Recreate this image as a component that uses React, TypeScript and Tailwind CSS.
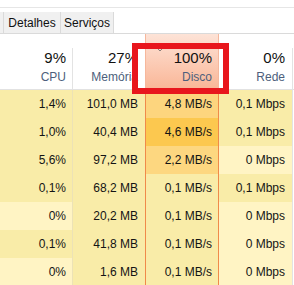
import React from "react";

type Row = {
  cpu: string;
  mem: string;
  disk: string;
  net: string;
  cpuBg: string;
  diskBg: string;
  netBg: string;
};

const DARK = "bg-[#f9eca8]";
const LIGHT = "bg-[#fff4c4]";

const rows: Row[] = [
  { cpu: "1,4%", mem: "101,0 MB", disk: "4,8 MB/s", net: "0,1 Mbps", cpuBg: DARK, diskBg: "bg-[#fdd57e]", netBg: DARK },
  { cpu: "1,0%", mem: "40,4 MB", disk: "4,6 MB/s", net: "0,1 Mbps", cpuBg: DARK, diskBg: "bg-[#fcc84f]", netBg: DARK },
  { cpu: "5,6%", mem: "97,2 MB", disk: "2,2 MB/s", net: "0 Mbps", cpuBg: DARK, diskBg: "bg-[#fdd780]", netBg: LIGHT },
  { cpu: "0,1%", mem: "68,2 MB", disk: "0,1 MB/s", net: "0,1 Mbps", cpuBg: DARK, diskBg: DARK, netBg: DARK },
  { cpu: "0%", mem: "20,2 MB", disk: "0,1 MB/s", net: "0 Mbps", cpuBg: LIGHT, diskBg: DARK, netBg: LIGHT },
  { cpu: "0,1%", mem: "41,8 MB", disk: "0,1 MB/s", net: "0 Mbps", cpuBg: DARK, diskBg: DARK, netBg: LIGHT },
  { cpu: "0%", mem: "1,6 MB", disk: "0,1 MB/s", net: "0 Mbps", cpuBg: LIGHT, diskBg: DARK, netBg: LIGHT },
];

function HeaderCell({ value, label, className }: { value: string; label: string; className: string }) {
  return (
    <div className={`flex flex-col items-end pt-[15px] ${className}`}>
      <span className="text-[15px] leading-[18px] text-[#111]">{value}</span>
      <span className="mt-[3px] text-[12px] leading-[14px] text-[#4d5f7c]">{label}</span>
    </div>
  );
}

export default function App() {
  return (
    <div className="relative h-[285px] w-[294px] overflow-hidden bg-white font-['Segoe_UI','Liberation_Sans',Arial,sans-serif]">
      {/* tabs */}
      <div className="h-[8px] border-b border-[#e6e6e6]" />
      <div className="h-[4px]" />
      <div className="flex h-[22px] border-b border-[#dadada] text-[12px] text-[#111]">
        <div className="w-[3px] bg-[#f0f0f0]" />
        <div className="flex w-[57px] items-center justify-center border-l border-[#dadada] bg-[#f0f0f0]">Detalhes</div>
        <div className="flex w-[54px] items-center justify-center border-x border-[#dadada] bg-[#f0f0f0]">Serviços</div>
        <div className="flex-1" />
      </div>

      {/* column headers */}
      <div className="flex h-[56px] border-b border-[#e2e2e2]">
        <HeaderCell value="9%" label="CPU" className="w-[72px] pr-[6px]" />
        <div className="mt-[14px] w-px bg-[#e3e3e3]" />
        <HeaderCell value="27%" label="Memória" className="w-[72px] pr-[7px]" />
        <div className="relative flex w-[74px] flex-col items-end border-x border-[#f6b79c] bg-gradient-to-b from-[#fde3d7] to-[#f9b697] pr-[6px] pt-[15px]">
          <svg className="absolute left-[10px] top-[13px]" width="8" height="5" viewBox="0 0 8 5">
            <polyline points="0.5,0.5 4,4 7.5,0.5" fill="none" stroke="#8a7f7a" strokeWidth="1" />
          </svg>
          <span className="text-[15px] leading-[18px] text-[#111]">100%</span>
          <span className="mt-[3px] text-[12px] leading-[14px] text-[#4d5f7c]">Disco</span>
        </div>
        <HeaderCell value="0%" label="Rede" className="w-[73px] pr-[7px]" />
        <div className="mt-[14px] w-px bg-[#e3e3e3]" />
      </div>

      {/* rows */}
      <div className="flex flex-col text-[12px] text-[#141414]">
        {rows.map((r, i) => (
          <div key={i} className="flex h-[28px]">
            <div className={`flex w-[72px] items-center justify-end pr-[6px] ${r.cpuBg}`}>{r.cpu}</div>
            <div className="w-px bg-[#ece2b6]" />
            <div className={`flex w-[72px] items-center justify-end pr-[7px] ${DARK}`}>{r.mem}</div>
            <div className="w-px bg-[#f08a4a]" />
            <div className={`flex w-[72px] items-center justify-end pr-[6px] ${r.diskBg}`}>{r.disk}</div>
            <div className="w-px bg-[#f08a4a]" />
            <div className={`flex w-[73px] items-center justify-end pr-[7px] ${r.netBg}`}>{r.net}</div>
            <div className="w-px bg-[#e3e3e3]" />
          </div>
        ))}
      </div>

      {/* red annotation box */}
      <div className="absolute left-[132px] top-[43px] h-[51px] w-[97px] border-[6px] border-[#e8161d]" />
    </div>
  );
}
